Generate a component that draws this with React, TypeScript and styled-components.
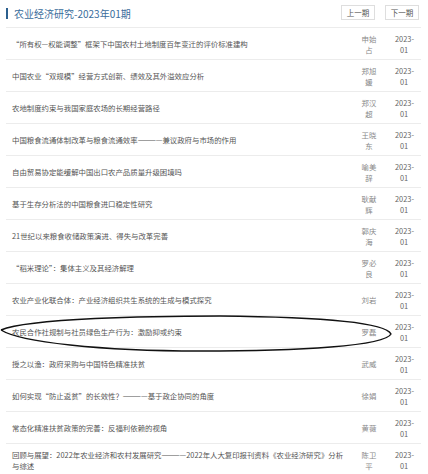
import React from 'react'
import styled, { createGlobalStyle } from 'styled-components'

const GlobalStyle = createGlobalStyle`
  html, body {
    margin: 0;
    padding: 0;
    background: #fff;
  }
  body {
    font-family: "Noto Sans CJK SC", "Open Sans", sans-serif;
  }
`

const Page = styled.div`
  position: relative;
  width: 428px;
  height: 474px;
  overflow: hidden;
  padding: 0 7px 0 6px;
  box-sizing: border-box;
`

/*** HEADER ***/
const Header = styled.header`
  display: flex;
  align-items: center;
  justify-content: space-between;
  height: 28px;
  border-bottom: 1px solid #ececec;
  box-sizing: border-box;
`

const Title = styled.h1`
  margin: 0;
  display: flex;
  align-items: center;
  gap: 6px;
  font-size: 10px;
  font-weight: normal;
  color: #3a6d9c;
  line-height: 12px;
  &::before {
    content: '';
    width: 2px;
    height: 11px;
    background: #2b5f8e;
  }
`

const Pager = styled.div`
  display: flex;
  gap: 10px;
  margin-right: 2px;
  margin-top: -2px;
`

const PageButton = styled.button`
  width: 34px;
  height: 15px;
  padding: 0;
  border: 1px solid #dedede;
  background: #fff;
  color: #555;
  font-family: inherit;
  font-size: 7.5px;
  line-height: 13px;
`

/*** LIST ***/
const List = styled.ul`
  list-style: none;
  margin: 0;
  padding: 0;
`

const Row = styled.li`
  display: grid;
  grid-template-columns: 1fr 36px 34px;
  align-items: center;
  height: 32px;
  border-bottom: 1px solid #ececec;
  box-sizing: border-box;
  font-size: 7.4px;
  line-height: 11px;
`

const ArticleTitle = styled.span`
  padding: 0 6px;
  color: #555;
`

const Author = styled.span`
  text-align: center;
  color: #888;
  padding: 0 9px;
`

const Issue = styled.span`
  text-align: center;
  color: #666;
  padding: 0 8px;
`

const Annotation = styled.svg`
  position: absolute;
  top: 0;
  left: 0;
  pointer-events: none;
`

const articles = [
  { title: '“所有权—权能调整”框架下中国农村土地制度百年变迁的评价标准建构', author: '申始占' },
  { title: '中国农业“双规模”经营方式创新、绩效及其外溢效应分析', author: '郑旭媛' },
  { title: '农地制度约束与我国家庭农场的长期经营路径', author: '郑汉超' },
  { title: '中国粮食流通体制改革与粮食流通效率————兼议政府与市场的作用', author: '王晓东' },
  { title: '自由贸易协定能缓解中国出口农产品质量升级困境吗', author: '喻美辞' },
  { title: '基于生存分析法的中国粮食进口稳定性研究', author: '耿献辉' },
  { title: '21世纪以来粮食收储政策演进、得失与改革完善', author: '郭庆海' },
  { title: '“稻米理论”：集体主义及其经济解理', author: '罗必良' },
  { title: '农业产业化联合体：产业经济组织共生系统的生成与模式探究', author: '刘岩' },
  { title: '农民合作社规制与社员绿色生产行为：激励抑或约束', author: '罗磊' },
  { title: '授之以渔：政府采购与中国特色精准扶贫', author: '武威' },
  { title: '如何实现“防止返贫”的长效性？————基于政企协同的角度', author: '徐娟' },
  { title: '常态化精准扶贫政策的完善：反福利依赖的视角', author: '黄薇' },
  { title: '回顾与展望：2022年农业经济和农村发展研究————2022年人大复印报刊资料《农业经济研究》分析与综述', author: '陈卫平' },
]

export default function App() {
  return (
    <>
      <GlobalStyle />
      <Page>
        <Header>
          <Title>农业经济研究-2023年01期</Title>
          <Pager>
            <PageButton>上一期</PageButton>
            <PageButton>下一期</PageButton>
          </Pager>
        </Header>

        <List>
          {articles.map((a) => (
            <Row key={a.title}>
              <ArticleTitle>{a.title}</ArticleTitle>
              <Author>{a.author}</Author>
              <Issue>2023-01</Issue>
            </Row>
          ))}
        </List>

        {/* hand-drawn circle around row 10 */}
        <Annotation width="428" height="474" viewBox="0 0 428 474">
          <path
            d="M1 330 C 30 318, 150 316, 220 316 C 320 317, 385 322, 391 334 C 385 346, 300 351, 200 351 C 100 351, 20 342, 1 330"
            fill="none"
            stroke="#111"
            strokeWidth="1.4"
          />
        </Annotation>
      </Page>
    </>
  )
}
